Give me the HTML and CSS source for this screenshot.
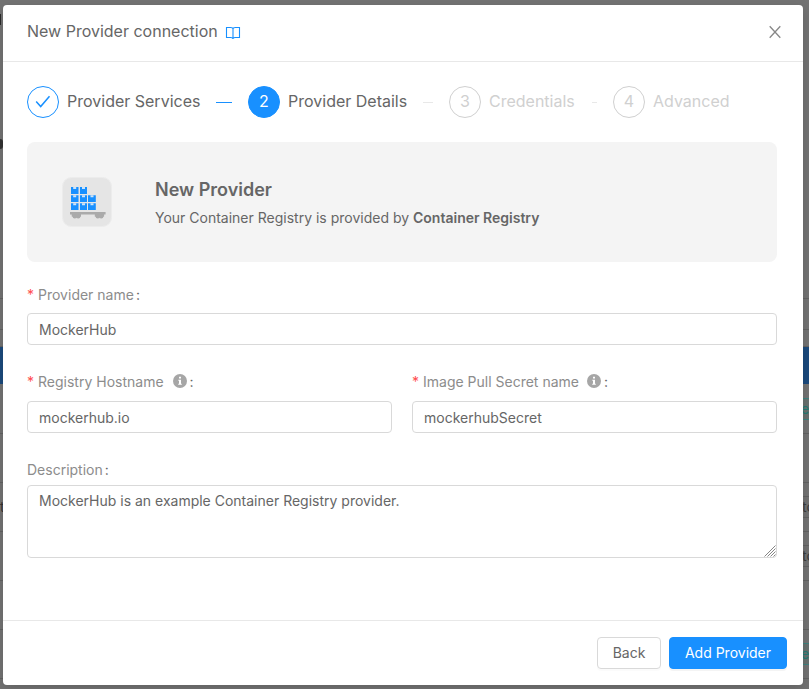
FILE: index.html
```html
<!DOCTYPE html>
<html lang="en">
<head>
<meta charset="utf-8">
<title>New Provider connection</title>
<link rel="stylesheet" href="styles.css">
</head>
<body>
<div class="page" aria-hidden="true">
  <div class="page-top"><i class="mark"></i><i class="mark round"></i></div>
  <div class="page-sub"></div>
  <div class="page-gap"></div>
  <div class="page-bar"></div>
  <div class="row"><span class="tag teal">er</span></div>
  <div class="row"></div>
  <div class="row"><span class="left-text">t</span><span class="tag">to</span></div>
  <div class="row"><span class="tag">to</span></div>
  <div class="row"></div>
  <div class="row"><span class="tag teal">er</span></div>
</div>
<main class="modal">
  <header class="modal-header">
    <h1>New Provider connection</h1>
    <svg class="book" width="16" height="14" viewBox="0 0 16 14"><path d="M1.5 1.5h4.1C7 1.5 8 2 8 3c0-1 1-1.5 2.4-1.5h4.1v10h-4.1c-1.5 0-2.4.3-2.4 1.5 0-1.2-.9-1.5-2.4-1.5H1.5zM8 3v10"/></svg>
    <svg class="close" width="14" height="14" viewBox="0 0 14 14"><path d="M1.7 1.2l10.6 11.6M12.3 1.2L1.7 12.8"/></svg>
  </header>
  <div class="modal-body">
    <ol class="steps">
      <li class="step done"><span class="dot"><svg width="16" height="14" viewBox="0 0 16 14"><path d="M1.2 6.6l4.5 5L14.5 1.2"/></svg></span><span class="label">Provider Services</span><i class="tail"></i></li>
      <li class="step active"><span class="dot"><span>2</span></span><span class="label">Provider Details</span><i class="tail"></i></li>
      <li class="step wait"><span class="dot"><span>3</span></span><span class="label">Credentials</span><i class="tail"></i></li>
      <li class="step wait"><span class="dot"><span>4</span></span><span class="label">Advanced</span></li>
    </ol>
    <section class="banner">
      <svg class="logo" width="50" height="50" viewBox="0 0 50 50">
        <rect x=".5" y=".5" width="49" height="49" rx="9" fill="#e5e5e5" stroke="#ececec"/>
        <g fill="#1890ff">
          <path d="M9 10h7.5v7H9zM18 10h7v7h-7zM9 18.2h7.5v6.8H9zM18 18.2h7v6.8h-7zM26 18.2h7.8v6.8H26zM9 26.2h7.5v6.8H9zM18 26.2h7v6.8h-7zM26 26.2h7.8v6.8H26z"/>
        </g>
        <path d="M11.2 10h3v2h-3zM20 10h3v2h-3zM11.2 18.2h3v2h-3zM20 18.2h3v2h-3zM28.5 18.2h3v2h-3zM11.2 26.2h3v2h-3zM20 26.2h3v2h-3zM28.5 26.2h3v2h-3z" fill="#cfe4f8"/>
        <path d="M8 35h35.6v2.5H8zM9.7 37h9.3v2.6H9.7zM32.8 37h9.3v2.6h-9.3z" fill="#aaa"/>
        <g fill="#aaa"><circle cx="12.8" cy="39.2" r="2.3"/><circle cx="16.2" cy="39.2" r="2.3"/><circle cx="35.8" cy="39.2" r="2.3"/><circle cx="39.2" cy="39.2" r="2.3"/></g>
      </svg>
      <div class="banner-text">
        <h2>New Provider</h2>
        <p>Your Container Registry is provided by <strong>Container Registry</strong></p>
      </div>
    </section>
    <form class="form">
      <div class="field wide">
        <label for="name" class="required">Provider name</label>
        <input id="name" type="text" value="MockerHub">
      </div>
      <div class="field half">
        <label for="host" class="required">Registry Hostname<svg class="info" width="14" height="14" viewBox="0 0 14 14"><circle cx="7" cy="7" r="7"/><path d="M6 2.8h2v1.8H6zM5.3 5.7H8v4h.8v1H5.2v-1H6V6.8h-.7z"/></svg></label>
        <input id="host" type="text" value="mockerhub.io">
      </div>
      <div class="field half">
        <label for="secret" class="required secret">Image Pull Secret name<svg class="info" width="14" height="14" viewBox="0 0 14 14"><circle cx="7" cy="7" r="7"/><path d="M6 2.8h2v1.8H6zM5.3 5.7H8v4h.8v1H5.2v-1H6V6.8h-.7z"/></svg></label>
        <input id="secret" type="text" value="mockerhubSecret">
      </div>
      <div class="field wide last">
        <label for="desc">Description</label>
        <textarea id="desc">MockerHub is an example Container Registry provider.</textarea>
        <svg class="grip" width="12" height="12" viewBox="0 0 12 12"><path d="M.5 11.5l11-11M3.5 11.5l8-8M6.5 11.5l5-5M9.5 11.5l2-2"/></svg>
      </div>
    </form>
  </div>
  <footer class="modal-footer">
    <button type="button" class="btn back">Back</button>
    <button type="button" class="btn primary">Add Provider</button>
  </footer>
</main>
</body>
</html>
```
FILE: styles.css
```css
* { box-sizing: border-box; }
body, h1, h2, p, ol { margin: 0; padding: 0; }
body {
  height: 689px;
  overflow: hidden;
  font: 14px/22px Inter, sans-serif;
  color: #666;
  background: #737373;
}

/* dimmed page behind the dialog */
.page { height: 689px; overflow: hidden; }
.page-top { height: 299px; border-bottom: 1px solid #626262; padding-top: 14px; }
.mark { display: block; width: 1px; height: 11px; background: #292929; }
.mark.round { width: 3px; height: 10px; margin-top: 114px; border-radius: 0 5px 5px 0; background: #333; }
.page-sub { height: 31px; border-bottom: 1px solid #626262; }
.page-gap { height: 17px; border-bottom: 1px solid #626262; }
.page-bar { height: 37px; background: #1b4a7d; }
.row { display: flex; align-items: center; height: 49px; padding-top: 1px; box-shadow: 0 1px #626262; }
.left-text { width: 3px; margin-right: auto; color: #333; }
.tag { flex: none; width: 60px; height: 22px; margin-left: auto; margin-right: -50px; padding-left: 2px; border: 1px solid #626262; background: #717171; color: #3d3d3d; line-height: 20px; }
.tag.teal { padding-left: 1px; border-color: #3e827e; background: #68716f; color: #257b74; }

.modal {
  position: absolute;
  left: 3px;
  top: 5px;
  display: flex;
  flex-direction: column;
  width: 800px;
  height: 680px;
  border-radius: 4px;
  background: #fff;
  box-shadow: 0 4px 12px rgba(0, 0, 0, .15);
}
.modal-header { display: flex; align-items: center; height: 57px; padding: 0 21px 3px 24px; border-bottom: 1px solid #e8e8e8; }
.modal-header h1 { margin-bottom: 2px; font-size: 16px; font-weight: 400; line-height: 24px; }
.book { margin: 2px 0 0 7px; fill: none; stroke: #1890ff; stroke-width: 1.1; }
.close { margin-left: auto; fill: none; stroke: #888; stroke-width: 1.3; }
.modal-body { flex: 1; padding: 24px; }

.steps { display: flex; gap: 16px; width: 750px; height: 32px; list-style: none; font-size: 16px; line-height: 30px; }
.step { display: flex; align-items: center; white-space: nowrap; }
.label { height: 32px; }
.dot { display: flex; align-items: center; justify-content: center; width: 32px; height: 32px; margin-right: 8px; border: 1px solid #1890ff; border-radius: 50%; }
.dot > span { height: 32px; }
.dot svg { fill: none; stroke: #1890ff; stroke-width: 1.5; }
.tail { height: 1px; margin: 1px 0 0 16px; background: #e8e8e8; }
.done .label { width: 133px; }
.done .tail { width: 16px; background: #1890ff; }
.active .dot { background: #1890ff; color: #fff; }
.active .label { width: 119px; }
.active .tail { width: 10px; }
.wait { color: #d0d0d0; }
.wait .dot { border-color: #d0d0d0; }
.wait .label { width: 87px; }
.wait .tail { width: 5px; }

.banner { display: flex; align-items: center; height: 120px; width: 750px; margin-top: 24px; padding: 0 35px; gap: 43px; border-radius: 8px; background: #f4f4f4; }
.banner-text { padding-top: 4px; }
.banner h2 { font-size: 18px; font-weight: 600; line-height: 28px; }
.banner p { line-height: 28px; }
.banner strong { font-weight: 600; }

.form { display: grid; grid-template-columns: 365px 365px; column-gap: 20px; row-gap: 24px; margin-top: 20px; }
.wide { grid-column: 1 / -1; }
.field { display: flex; flex-direction: column; }
.field label { display: flex; align-items: center; height: 26px; margin-bottom: 5px; color: #8c8c8c; }
.field label::after { content: ":"; margin-left: 2px; color: #666; }
.half label { margin-bottom: 6px; }
.last { position: relative; }
.last label { margin-bottom: 2px; }
.required::before { content: "*"; margin-right: 4px; color: #ff4d4f; }
.info { margin: 0 1px 2px 9px; fill: #a6a6a6; }
.secret .info { margin-left: 8px; }
.info path { fill: #fff; }
.field input, .field textarea {
  width: 100%;
  height: 32px;
  padding: 0 11px;
  border: 1px solid #d9d9d9;
  border-radius: 4px;
  outline: 0;
  background: #fff;
  color: #666;
  font: inherit;
}
.field textarea { display: block; height: 73px; padding-top: 4px; resize: none; }
.grip { position: absolute; right: 1px; bottom: 1px; fill: none; stroke: #777; stroke-width: .9; }

.modal-footer { display: flex; justify-content: flex-end; gap: 8px; height: 65px; padding: 16px 16px 0; border-top: 1px solid #e8e8e8; }
.btn { height: 32px; padding: 0 15px; border: 1px solid #d9d9d9; border-radius: 4px; background: #fff; color: #666; font: inherit; box-shadow: 0 2px 0 rgba(0, 0, 0, .015); }
.btn.back { width: 64px; padding: 0; }
.btn.primary { width: 118px; padding: 0; border-color: #1890ff; background: #1890ff; color: #fff; box-shadow: 0 2px 0 rgba(0, 0, 0, .045); }
```
